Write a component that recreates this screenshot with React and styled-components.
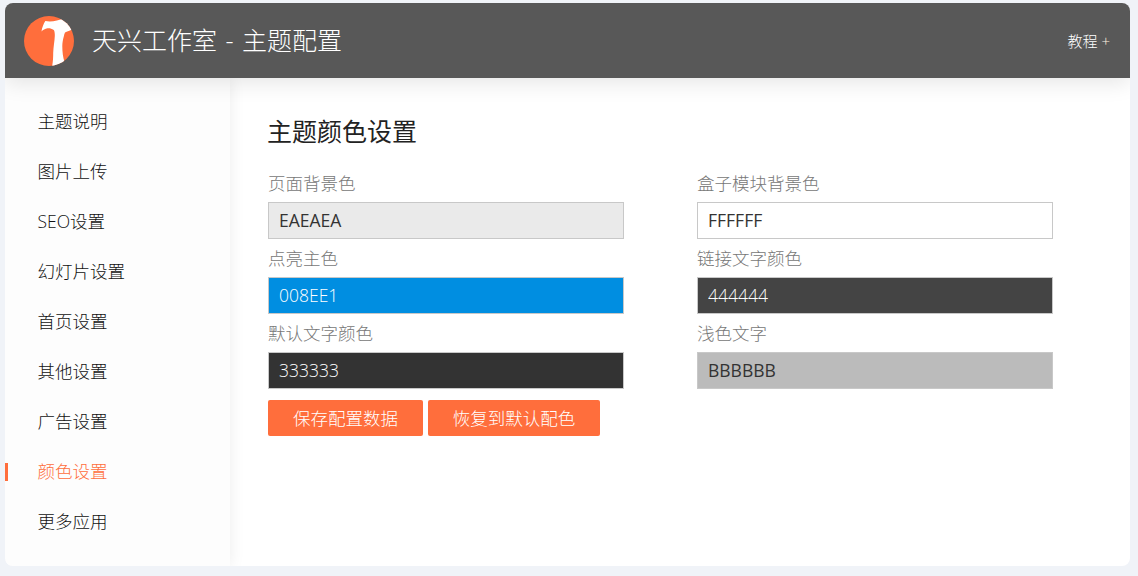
import React from "react";
import styled, { createGlobalStyle } from "styled-components";

const NAV_ITEMS = [
  "主题说明",
  "图片上传",
  "SEO设置",
  "幻灯片设置",
  "首页设置",
  "其他设置",
  "广告设置",
  "颜色设置",
  "更多应用",
];

const FIELDS = [
  { label: "页面背景色", value: "EAEAEA", bg: "#eaeaea", color: "#333", weight: 400 },
  { label: "盒子模块背景色", value: "FFFFFF", bg: "#fff", color: "#333", weight: 400 },
  { label: "点亮主色", value: "008EE1", bg: "#008ee1", color: "#fff", weight: 300 },
  { label: "链接文字颜色", value: "444444", bg: "#444", color: "#fff", weight: 300 },
  { label: "默认文字颜色", value: "333333", bg: "#333", color: "#fff", weight: 300 },
  { label: "浅色文字", value: "BBBBBB", bg: "#bbb", color: "#333", weight: 400 },
];

export default function App() {
  return (
    <>
      <GlobalStyle />
      <Page>
        <Frame>
          <Header>
            <Brand>
              <Logo />
              <Title>天兴工作室 - 主题配置</Title>
            </Brand>
            <HelpLink>
              教程 <Plus>+</Plus>
            </HelpLink>
          </Header>
          <Body>
            <Sidebar>
              {NAV_ITEMS.map((item) => (
                <NavItem key={item} $active={item === "颜色设置"}>
                  {item}
                </NavItem>
              ))}
            </Sidebar>
            <Main>
              <Heading>主题颜色设置</Heading>
              <FieldGrid>
                {FIELDS.map((f) => (
                  <Field key={f.label}>
                    <FieldLabel>{f.label}</FieldLabel>
                    <ColorInput
                      readOnly
                      value={f.value}
                      $bg={f.bg}
                      $color={f.color}
                      $weight={f.weight}
                    />
                  </Field>
                ))}
              </FieldGrid>
              <Buttons>
                <Button $width={155}>保存配置数据</Button>
                <Button $width={172}>恢复到默认配色</Button>
              </Buttons>
            </Main>
          </Body>
        </Frame>
      </Page>
    </>
  );
}

function Logo() {
  return (
    <LogoSvg viewBox="0 0 50 50">
      <defs>
        <clipPath id="logo-circle">
          <circle cx="25" cy="25" r="25" />
        </clipPath>
      </defs>
      <circle cx="25" cy="25" r="25" fill="#ff6e3c" />
      <path
        clipPath="url(#logo-circle)"
        fill="#fff"
        d="M17.5 15.5 C18 11.5 19.5 8 21.3 5 C27 6 34 5 40 2 L52 12 C47 14 43 15.5 41 16.5 C40.4 18 40 19 39.8 20.5 C38.8 24 38.3 27 38.3 30 C38.3 36 39 41 40.5 46 L28 51 C29 46 29.2 41 29.2 36.7 C29.4 31 30.6 25 30.8 20 C30.9 17 30.5 15 29.8 14 C27.5 12.5 25.5 12 23.5 12.3 C21 12.8 19 13.8 17.5 15.5 Z"
      />
    </LogoSvg>
  );
}

const GlobalStyle = createGlobalStyle`
  html, body {
    margin: 0;
    background: #f0f3f8;
  }
  * {
    box-sizing: border-box;
  }
  body {
    font-family: "Open Sans", "Noto Sans CJK SC", sans-serif;
    font-weight: 300;
  }
`;

const Page = styled.div`
  width: 1138px;
  height: 576px;
  padding: 3px 8px 10px 5px;
  overflow: hidden;
`;

const Frame = styled.div`
  height: 100%;
  display: flex;
  flex-direction: column;
  background: #fff;
  border-radius: 8px;
  overflow: hidden;
`;

const Header = styled.header`
  position: relative;
  z-index: 2;
  flex: none;
  height: 75px;
  padding: 0 20px 0 19px;
  display: flex;
  align-items: center;
  justify-content: space-between;
  background: #585858;
  box-shadow: 0 5px 20px rgba(0, 0, 0, 0.1);
`;

const Brand = styled.div`
  display: flex;
  align-items: center;
  gap: 18px;
`;

const LogoSvg = styled.svg`
  display: block;
  width: 50px;
  height: 50px;
  margin-top: 1px;
`;

const Title = styled.div`
  padding-bottom: 3px;
  font-size: 25px;
  word-spacing: 2px;
  color: #fff;
`;

const HelpLink = styled.div`
  margin-left: -1px;
  font-size: 15px;
  color: #fff;
`;

const Plus = styled.span`
  color: #fff2e0;
`;

const Body = styled.div`
  flex: 1;
  min-height: 0;
  display: flex;
`;

const Sidebar = styled.nav`
  flex: none;
  width: 225px;
  padding-top: 17px;
  background: #fdfdfd;
  box-shadow: 0 0 15px rgba(0, 0, 0, 0.08);
`;

const NavItem = styled.div`
  position: relative;
  height: 50px;
  padding-left: 32.5px;
  display: flex;
  align-items: center;
  font-size: 17.5px;
  color: ${(p) => (p.$active ? "#ff6e3c" : "#111")};

  &::before {
    content: "";
    display: ${(p) => (p.$active ? "block" : "none")};
    position: absolute;
    left: 0;
    top: 18px;
    width: 3px;
    height: 18px;
    background: #ff6e3c;
  }
`;

const Main = styled.main`
  flex: 1;
  padding: 36px 0 0 38px;
`;

const Heading = styled.h1`
  margin: 0 0 17px -1px;
  font-size: 25px;
  font-weight: 400;
  line-height: 34px;
  color: #222;
`;

const FieldGrid = styled.div`
  display: grid;
  grid-template-columns: repeat(2, 356px);
  column-gap: 73px;
`;

const Field = styled.label`
  display: block;
  height: 75px;
`;

const FieldLabel = styled.div`
  height: 37px;
  line-height: 37px;
  font-size: 17.5px;
  color: #777;
`;

const ColorInput = styled.input`
  display: block;
  width: 100%;
  height: 37px;
  padding: 0 10px 2px;
  border: 1px solid #c8c8c8;
  outline: none;
  border-radius: 0;
  font: inherit;
  font-size: 17.5px;
  font-weight: ${(p) => p.$weight};
  background: ${(p) => p.$bg};
  color: ${(p) => p.$color};
`;

const Buttons = styled.div`
  display: flex;
  gap: 5px;
  margin-top: 10px;
`;

const Button = styled.button`
  width: ${(p) => p.$width}px;
  height: 36px;
  padding: 0 0 1px;
  border: none;
  border-radius: 2px;
  font: inherit;
  font-size: 17.5px;
  color: #fff;
  background: #ff6e3c;
`;
